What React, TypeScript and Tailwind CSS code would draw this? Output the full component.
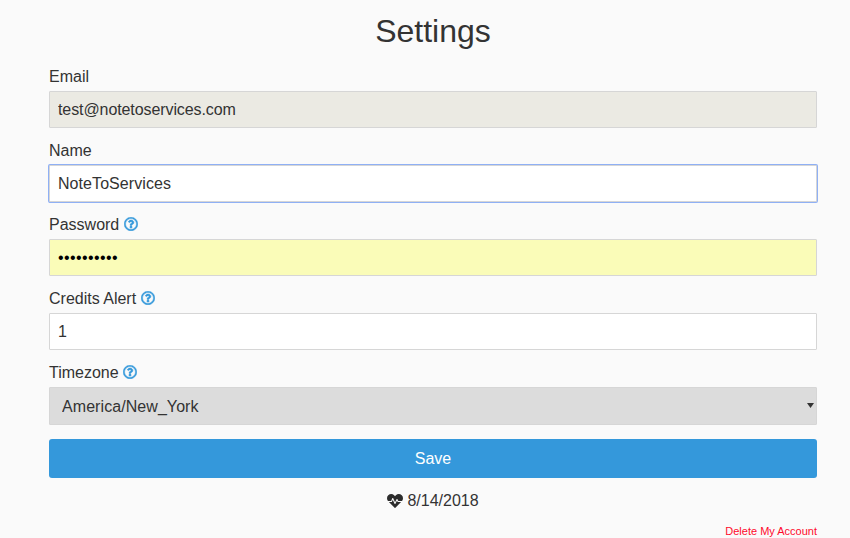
import { FaHeartbeat, FaRegQuestionCircle } from "react-icons/fa";

const inputClass = "block h-[37px] w-full rounded-[1px] border border-[#d6d6d6] px-2 text-base text-[#333] outline-none";

function Hint({ margin = "ml-[5px]" }: { margin?: string }) {
  return (
    <FaRegQuestionCircle
      className={`${margin} inline-block stroke-current stroke-[18] align-[-1px] text-[14px] text-[#3498db]`}
    />
  );
}

export default function App() {
  return (
    <main className="h-[538px] overflow-hidden bg-[#fafafa] pl-[49px] pr-[33px] font-['Liberation_Sans',sans-serif] text-[#333]">
      <h1 className="pt-[12px] text-center text-[32px] leading-[38px]">Settings</h1>

      <form className="mt-[15px]">
        <div className="mb-[11px]">
          <label className="mb-[3px] block text-base leading-[23px]">Email</label>
          <input readOnly value="test@notetoservices.com" className={`${inputClass} bg-[#ebeae3] tracking-[-0.09px]`} />
        </div>
        <div className="mb-[11px]">
          <label className="mb-[3px] block text-base leading-[23px]">Name</label>
          <input
            readOnly
            value="NoteToServices"
            className={`${inputClass} border-[#8fb0f5] bg-white tracking-[0.07px] shadow-[0_0_0_1px_#8fb0f5]`}
          />
        </div>
        <div className="mb-[11px]">
          <label className="mb-[3px] block text-base leading-[23px]">
            Password
            <Hint />
          </label>
          <input
            readOnly
            type="password"
            value="password12"
            className={`${inputClass} bg-[#fafcb8] tracking-[0.4px] text-black`}
          />
        </div>
        <div className="mb-[11px]">
          <label className="mb-[3px] block text-base leading-[23px]">
            Credits Alert
            <Hint />
          </label>
          <input readOnly value="1" className={`${inputClass} bg-white`} />
        </div>
        <div className="mb-[14px]">
          <label className="mb-[3px] block text-base leading-[23px]">
            Timezone
            <Hint margin="ml-[4px]" />
          </label>
          <div className="relative">
            <select className="block h-[38px] w-full appearance-none rounded-[1px] border border-[#d6d6d6] bg-[#dcdcdc] px-3 pt-[2px] text-base tracking-[0.07px] text-[#333] outline-none">
              <option>America/New_York</option>
            </select>
            <svg viewBox="0 0 7 5" className="pointer-events-none absolute right-[3px] top-[16px] h-[5px] w-[7px]">
              <path d="M0 0h7L3.5 5z" fill="#333" />
            </svg>
          </div>
        </div>
        <button type="button" className="block h-[39px] w-full rounded-[3px] bg-[#3498db] text-base text-white">
          Save
        </button>
      </form>

      <p className="mt-[12px] flex items-center justify-center text-base leading-[22px]">
        <FaHeartbeat className="mr-1 text-base text-[#2c2c2c]" />
        8/14/2018
      </p>
      <div className="mt-[12px] text-right text-[11px] leading-[14px] text-[#ff0a2c]">Delete My Account</div>
    </main>
  );
}
